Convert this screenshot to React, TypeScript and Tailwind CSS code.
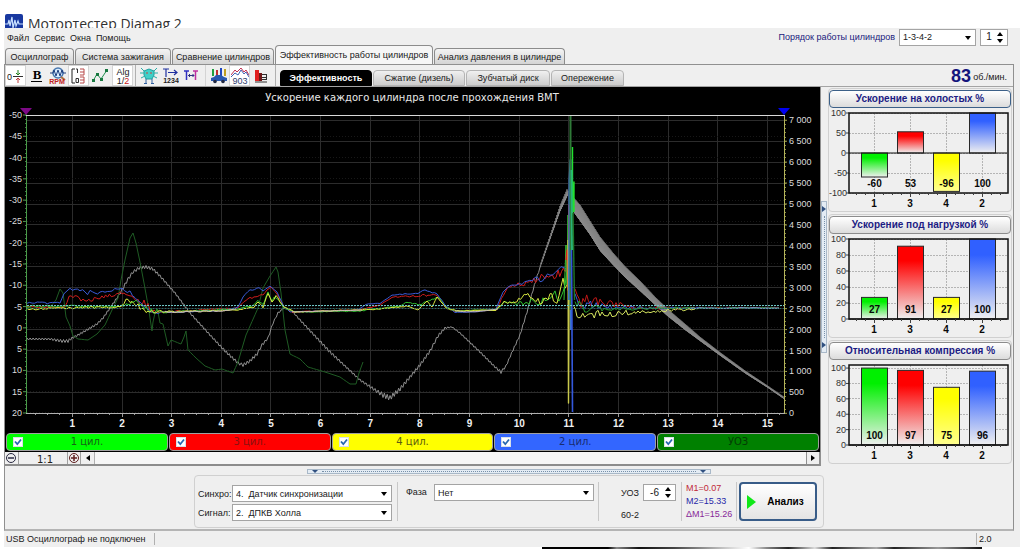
import { useState } from "react";
import type { ReactNode } from "react";
import clsx from "clsx";

type Point = [number, number, number?];

const rnd = (i: number, seed: number) => {
  const v = Math.sin(i * 127.1 + seed * 311.7) * 43758.5453;
  return v - Math.floor(v);
};

// interpolates between the key points and adds noise (third value = amplitude)
const trace = (pts: Point[], seed: number, step = 2, saw = false) => {
  const out: string[] = [];
  let n = 0;
  for (let i = 0; i < pts.length - 1; i++) {
    const [x0, y0, a0 = 0] = pts[i];
    const [x1, y1, a1 = 0] = pts[i + 1];
    const count = Math.max(1, Math.round(Math.abs(x1 - x0) / step));
    for (let k = 0; k < count; k++) {
      const t = k / count;
      const amp = a0 + (a1 - a0) * t;
      const noise = saw ? (n % 2 ? 1 : -1) : rnd(n, seed) * 2 - 1;
      out.push(`${(x0 + (x1 - x0) * t).toFixed(1)},${(y0 + (y1 - y0) * t + noise * amp).toFixed(1)}`);
      n++;
    }
  }
  const last = pts[pts.length - 1];
  out.push(`${last[0]},${last[1]}`);
  return out.join(" ");
};

const rpmRise: Point[] = [
  [27, 339, 1], [50, 339, 1], [62, 341, 1.5], [68, 341, 1.5], [72, 338, 1], [78, 335, 1], [85, 331, 1], [97, 324, 1],
  [103, 318, 1], [110, 308, 1], [117, 298, 1], [122, 290, 1.5], [128, 279, 1.5], [133, 272, 1.5], [139, 268, 1.5],
  [146, 267, 1.5], [153, 269, 1.5], [160, 276, 1.2], [175, 293, 1], [190, 313, 1], [210, 335, 1], [225, 351, 1.3],
  [238, 363, 1.5], [243, 365, 1.5], [250, 361, 1.5], [257, 354, 1.5], [262, 345, 1.5], [268, 338, 1], [273, 323, 1],
  [278, 313, 1], [284, 308, 0.5], [292, 311, 0.5], [300, 320, 1], [330, 352, 1.5], [345, 366, 1], [360, 380, 1],
  [375, 390, 1.5], [383, 395, 2.5], [390, 398, 2.5], [400, 389, 2], [410, 377, 1.5], [420, 365, 1.5], [430, 351, 1.5],
  [438, 336, 1.5], [445, 328, 1], [452, 327, 0.5], [460, 333, 0.7], [480, 352, 1], [495, 367, 1], [501, 372, 1.5],
  [506, 366, 1], [513, 350, 1], [520, 335, 1], [527, 312, 1], [533, 290, 1], [540, 267, 1],
];

const rpmPeak: Point[] = [[540, 267, 1.5], [550, 238, 2], [560, 209, 3], [568, 191, 4]];

const rpmFall: Point[] = [
  [572, 203, 7], [580, 213, 8], [590, 228, 7], [600, 244, 7], [613, 259, 6], [625, 272, 5.5], [640, 286, 5],
  [655, 301, 4], [668, 313, 3.5], [685, 327, 3], [700, 339, 2], [720, 354, 1.6], [745, 372, 1.3], [768, 387, 1], [784, 398, 1],
];

const advance: Point[] = [
  [27, 308, 1], [50, 307, 1], [56, 300], [60, 289], [63, 293], [66, 317], [70, 326], [73, 336], [78, 339], [88, 340],
  [97, 334], [105, 325], [112, 310], [118, 298], [121, 280], [125, 260], [130, 238], [133, 233], [136, 243], [140, 262],
  [144, 283], [148, 305], [152, 331], [153, 322], [155, 313], [158, 312], [160, 323], [163, 324], [168, 346], [171, 340],
  [181, 344], [184, 337], [186, 331], [188, 350], [196, 358], [205, 366], [215, 370], [222, 369], [233, 373], [238, 362],
  [246, 335], [258, 308], [263, 288], [270, 276], [276, 267], [278, 272], [281, 293], [285, 330], [290, 354], [300, 359],
  [308, 367], [325, 372], [340, 377], [350, 384], [356, 384], [359, 373], [363, 362],
];

const blue: Point[] = [
  [27, 303, 1], [60, 303, 1], [64, 293, 1], [70, 290, 2], [95, 293, 3], [105, 291, 2], [122, 289, 1], [130, 292, 2],
  [140, 300, 4], [150, 308, 4], [156, 313, 1], [165, 312, 1], [180, 312, 0.6], [225, 310, 0.5], [238, 307, 0.5],
  [243, 297, 0.5], [250, 290, 1], [259, 288, 0.5], [263, 291, 0], [270, 286, 0], [277, 292, 0], [284, 307, 0.5],
  [290, 312, 0.5], [330, 311, 0.3], [358, 310, 0.3], [366, 304, 0.5], [380, 303, 0.5], [392, 295, 0.5], [405, 294, 0.5],
  [418, 293, 0.5], [425, 290, 0.5], [437, 294, 0.5], [445, 305, 0.5], [455, 312, 0.5], [475, 312, 0.3], [496, 309, 0.5],
  [503, 292, 0.5], [509, 286, 0.5], [522, 283, 1.5], [535, 281, 4], [550, 275, 4], [561, 264, 4], [567, 270, 5],
];
const red: Point[] = [
  [27, 307, 1], [65, 307, 1], [69, 298, 3], [85, 300, 4], [100, 298, 2], [115, 294, 2], [122, 292, 2], [130, 297, 3],
  [140, 301, 4], [150, 308, 4], [156, 313, 1], [165, 312, 1], [238, 308, 0.5], [246, 300, 1], [256, 296, 1],
  [263, 295, 0.5], [267, 290, 0], [271, 287, 0], [277, 294, 0], [284, 307, 0.5], [292, 312, 0.5], [360, 310, 0.5],
  [380, 305, 0.5], [392, 297, 0.5], [415, 296, 1], [428, 296, 2], [437, 295, 1], [445, 307, 0.5], [455, 311, 0.5],
  [496, 310, 0.5], [507, 288, 1], [520, 284, 2], [530, 282, 5], [545, 279, 6], [558, 272, 6], [567, 268, 8],
];
const green: Point[] = [
  [27, 306, 1.5], [65, 306, 1], [120, 307, 1], [128, 303, 3], [138, 302, 2], [146, 309, 3], [155, 311, 3],
  [165, 312, 1], [238, 309, 0.5], [254, 305, 1], [258, 301, 1], [263, 305, 1], [268, 293, 2], [272, 300, 2],
  [276, 297, 1], [284, 308, 0.5], [295, 312, 0.5], [360, 311, 0.5], [390, 307, 0.5], [400, 306, 0.5], [407, 302, 0.5],
  [420, 305, 1], [428, 301, 1], [438, 297, 1], [447, 308, 0.5], [456, 311, 0.5], [496, 310, 0.5], [504, 302, 1],
  [525, 303, 3], [545, 300, 4], [557, 297, 8], [567, 270, 20],
];
const yellow: Point[] = [
  [27, 309, 1], [65, 308, 1], [120, 307, 1], [126, 301, 3], [134, 302, 3], [142, 310, 3], [152, 311, 3],
  [165, 312, 1], [238, 310, 0.5], [254, 307, 0.5], [258, 302, 1], [263, 307, 1], [268, 293, 1], [272, 302, 1],
  [276, 296, 1], [284, 307, 0.5], [295, 312, 0.5], [380, 309, 0.5], [408, 306, 0.5], [418, 310, 0], [427, 301, 0],
  [432, 307, 0], [437, 297, 0], [447, 309, 0.5], [460, 311, 0.3], [496, 310, 0.5], [504, 302, 1], [515, 303, 1],
  [526, 293, 2], [540, 302, 4], [550, 297, 5], [557, 300, 6], [563, 280, 8], [567, 285, 8],
];

const tail = (y: number, amp: number): Point[] => [
  [575, y - 6, amp * 2], [581, y, amp * 1.5], [600, y + 1, amp], [622, 308 + (y - 306) / 2, amp / 2],
  [650, 308, 1.5], [690, 308, 0.8], [740, 308, 0.6], [779, 308, 0.4],
];

const xAt = (v: number) => 22.7 + v * 49.65;
const yAt = (v: number) => 115 + (v + 50) * 4.257;
const rpmAt = (v: number) => 413.3 - v * 0.04186;

const leftTicks = [-50, -45, -40, -35, -30, -25, -20, -15, -10, -5, 0, 5, 10, 15, 20];
const rightTicks = [7000, 6500, 6000, 5500, 5000, 4500, 4000, 3500, 3000, 2500, 2000, 1500, 1000, 500, 0];
const xTicks = [1, 2, 3, 4, 5, 6, 7, 8, 9, 10, 11, 12, 13, 14, 15];

function MainChart() {
  return (
    <svg viewBox="5 87 815 346" className="block w-full bg-black" fontFamily="Liberation Sans, sans-serif">
      <text x="412" y="101" fill="#e8e8e8" fontSize="10" textAnchor="middle" fontFamily="DejaVu Sans, sans-serif">
        Ускорение каждого цилиндра после прохождения ВМТ
      </text>
      <g stroke="#2c2c2c" strokeWidth="1" shapeRendering="crispEdges">
        {xTicks.map((t) => (
          <line key={t} x1={xAt(t)} x2={xAt(t)} y1="115" y2="413" />
        ))}
        {rightTicks.map((t) => (
          <line key={t} x1="27" x2="784" y1={rpmAt(t)} y2={rpmAt(t)} />
        ))}
        {leftTicks.map((t) => (
          <line key={t} x1="27" x2="784" y1={yAt(t)} y2={yAt(t)} stroke="#181818" strokeDasharray="1 2" />
        ))}
      </g>
      <g fontSize="9" fill="#dcdcdc">
        {leftTicks.map((t) => (
          <g key={t}>
            <text x="22" y={yAt(t) + 3} textAnchor="end">{t}</text>
            <line x1="23" x2="27" y1={yAt(t)} y2={yAt(t)} stroke="#4f9a4f" />
          </g>
        ))}
        {rightTicks.map((t) => (
          <g key={t}>
            <text x="789" y={rpmAt(t) + 3}>{t >= 1000 ? `${Math.floor(t / 1000)} ${String(t % 1000).padStart(3, "0")}` : t}</text>
            <line x1="784" x2="787" y1={rpmAt(t)} y2={rpmAt(t)} stroke="#a8a84c" />
          </g>
        ))}
        {xTicks.map((t) => (
          <text key={t} x={xAt(t)} y="427" fontSize="10" textAnchor="middle" fontWeight="bold" fill="#f0f0f0">{t}</text>
        ))}
      </g>
      <g shapeRendering="crispEdges">
        {Array.from({ length: 70 }, (_, i) => (
          <line key={i} x1="25" x2="27" y1={yAt(i - 50)} y2={yAt(i - 50)} stroke="#3c7c3c" />
        ))}
        {Array.from({ length: 70 }, (_, i) => (
          <line key={i} x1="784" x2="786" y1={rpmAt(i * 100)} y2={rpmAt(i * 100)} stroke="#8a8a3c" />
        ))}
        {Array.from({ length: 61 }, (_, i) => (
          <line key={i} x1={xAt(0.25 + i / 4)} x2={xAt(0.25 + i / 4)} y1="413" y2={i % 4 === 3 ? 417 : 415} stroke="#9a9a9a" />
        ))}
        <line x1="26.5" x2="26.5" y1="115" y2="414" stroke="#4a9a4a" />
        <line x1="784.5" x2="784.5" y1="115" y2="414" stroke="#b4b45c" />
        <line x1="26" x2="785" y1="115.5" y2="115.5" stroke="#d8d8d8" />
        <line x1="26" x2="785" y1="413.5" y2="413.5" stroke="#b0b0b0" />
      </g>
      <path d="M20 108h12l-6 7z" fill="#7d0a86" />
      <path d="M778 108h12l-6 7z" fill="#0000f0" />

      <g fill="none" strokeWidth="1" strokeLinejoin="round">
        <polyline points={trace(rpmRise, 1, 1.5, true)} stroke="#909090" />
        <polyline points={trace(rpmPeak, 1, 0.5, true)} stroke="#8a8a8a" />
        <polyline points={trace(rpmFall, 2, 0.5, true)} stroke="#8a8a8a" />
        <polyline points={trace(advance, 3, 3)} stroke="#1f5c24" />
        <polyline points={trace(red, 4, 2)} stroke="#d01c1c" />
        <polyline points={trace(blue, 5, 2.5)} stroke="#3a5cd8" />
        <polyline points={trace(green, 6, 2)} stroke="#30c030" />
        <polyline points={trace(yellow, 7, 2)} stroke="#d8e840" />
        <polyline points={trace([[165, 312, 1], [225, 311, 0.6], [236, 309]], 8, 3)} stroke="#c8b8b8" />
        <polyline points={trace([[292, 312, 0.4], [330, 311, 0.3], [362, 310]], 9, 3)} stroke="#c8b8b8" />
        <polyline points={trace([[455, 311, 0.3], [475, 312, 0.3], [498, 309]], 10, 3)} stroke="#c8b8b8" />
        <polyline points={trace(tail(301, 5), 11, 2)} stroke="#c01818" />
        <polyline points={trace(tail(305, 4), 12, 2)} stroke="#3a5cd8" />
        <polyline points={trace(tail(308, 3), 13, 2)} stroke="#28a028" />
        <polyline points={trace([[574, 305, 4], [577, 315, 3], [600, 315, 5], [622, 313, 3], [650, 311, 2], [695, 309, 1]], 14, 2)} stroke="#d8e860" />
        <polyline points={trace([[690, 308, 0.8], [740, 308, 0.6], [779, 308, 0.4]], 15, 3)} stroke="#8090c0" />
        {/* peak at 11 */}
        <polyline points="564,300 566,245 567,285 568,215 569,300" stroke="#35c835" />
        <polyline points="566,260 567,250 568,290 569,205 570,300" stroke="#d82020" strokeWidth="1.4" />
        <polyline points="568,240 568.5,403 569,310 570,280" stroke="#c8c84c" strokeWidth="1.4" />
        <polyline points="569,300 569.5,180 570.5,160 571,330" stroke="#3c78c8" strokeWidth="2" />
        <polyline points="570.5,310 570.5,116" stroke="#2f7a38" strokeWidth="2" />
        <polyline points="572.5,147 572.5,214 574,182 574,212" stroke="#22e02e" strokeWidth="1.4" />
        <polyline points="571.5,170 572,250" stroke="#28b478" strokeWidth="2" />
        <polyline points="573,213 574.5,300" stroke="#207828" strokeWidth="1.4" />
        <polyline points="571.5,250 572.5,412" stroke="#3458dc" strokeWidth="1.6" />
      </g>
      <line x1="27" x2="784" y1="305.5" y2="305.5" stroke="#6cc4c4" strokeDasharray="2 1" />
      <line x1="27" x2="784" y1="308.5" y2="308.5" stroke="#207070" strokeDasharray="1 2" />
    </svg>
  );
}

type BarInfo = { label: string; value: number; from: string };

const barColors: Record<string, string> = { "1": "#00f000", "3": "#ff0000", "4": "#ffff00", "2": "#3060ff" };

function BarPanel({ id, title, values, min, max, ticks, focused }: {
  id: string;
  title: string;
  values: number[];
  min: number;
  max: number;
  ticks: number[];
  focused?: boolean;
}) {
  const bars: BarInfo[] = ["1", "3", "4", "2"].map((label, i) => ({ label, value: values[i], from: barColors[label] }));
  const y = (v: number) => 5 + ((max - v) / (max - min)) * 80;
  return (
    <section className="rounded-sm border border-[#d0d0d0] pt-px">
      <button
        type="button"
        className={clsx(
          "flex h-[18px] w-full items-center justify-center rounded-sm border bg-gradient-to-b from-white to-[#dcdcdc] text-[10px] font-bold text-[#1c1c84]",
          focused ? "border-[#3c6088]" : "border-[#8c8c8c]"
        )}
      >
        {title}
      </button>
      <svg viewBox="0 0 182 103" className="block w-full" fontFamily="Liberation Sans, sans-serif">
        <defs>
          {bars.map((b) => (
            <linearGradient key={b.label} id={`${id}-${b.label}`} x1="0" y1="0" x2="0" y2="1">
              <stop offset="0.2" stopColor={b.from} />
              <stop offset="1" stopColor={b.label === "4" ? "#ffff90" : "#f0f0f0"} />
            </linearGradient>
          ))}
        </defs>
        <g stroke="#b4b4b4" strokeDasharray="2 1" shapeRendering="crispEdges">
          {ticks.map((t) => (
            <line key={t} x1="20" x2="178" y1={y(t)} y2={y(t)} />
          ))}
          {bars.map((b, i) => (
            <line key={b.label} x1={45.5 + i * 36} x2={45.5 + i * 36} y1="5" y2="85" />
          ))}
        </g>
        {ticks.map((t) => (
          <g key={t}>
            <text x={t < 0 ? 18 : 17} y={y(t) + 3} fontSize="9" textAnchor="end" fill="#303030">{t}</text>
            <line x1="17" x2="20" y1={y(t)} y2={y(t)} stroke="#404040" />
          </g>
        ))}
        {bars.map((b, i) => {
          const top = Math.min(y(b.value), y(0));
          return (
            <rect
              key={b.label}
              x={32.5 + i * 36}
              y={top}
              width="26"
              height={Math.abs(y(b.value) - y(0))}
              fill={`url(#${id}-${b.label})`}
              stroke="#282828"
            />
          );
        })}
        <line x1="20" x2="178" y1={y(0)} y2={y(0)} stroke="#101010" />
        <rect x="20" y="5" width="159" height="80" fill="none" stroke="#101010" strokeWidth="1.5" />
        {Array.from({ length: 17 }, (_, i) => (
          <line key={i} x1={27.5 + i * 9} x2={27.5 + i * 9} y1="85" y2={i % 4 === 2 ? 89 : 87} stroke="#404040" />
        ))}
        <g fontWeight="bold" fontSize="10" textAnchor="middle" fill="#080808">
          {bars.map((b, i) => (
            <text key={b.label} x={45.5 + i * 36} y="79">{b.value}</text>
          ))}
          {bars.map((b, i) => (
            <text key={b.label} x={45 + i * 36} y="99">{b.label}</text>
          ))}
        </g>
      </svg>
    </section>
  );
}

function Select({ id, options, className }: { id: string; options: string[]; className?: string }) {
  return (
    <div className={clsx("relative", className)}>
      <select id={id} className="block h-[17px] w-full appearance-none border border-[#a4a4a4] bg-white px-[3px] text-[9px] leading-[14px] text-[#202020]">
        {options.map((o) => (
          <option key={o}>{o}</option>
        ))}
      </select>
      <svg viewBox="0 0 6 4" className="pointer-events-none absolute top-[7px] right-[5px] h-1 w-1.5">
        <path d="M0 0h6L3 4z" fill="#000" />
      </svg>
    </div>
  );
}

function Spinner({ id, initial, className }: { id: string; initial: number; className?: string }) {
  const [value, setValue] = useState(initial);
  return (
    <div className={clsx("flex h-[17px] items-center border border-[#a4a4a4] bg-white pr-1", className)}>
      <input
        id={id}
        aria-label={id}
        className="w-full min-w-0 flex-1 bg-transparent text-center text-[10px] outline-none"
        value={value}
        onChange={(e) => setValue(Number(e.target.value) || 0)}
      />
      <div className="flex flex-col gap-[3px]">
        <button type="button" aria-label="+" onClick={() => setValue(value + 1)}>
          <svg viewBox="0 0 6 4" className="block h-1 w-1.5"><path d="M0 4h6L3 0z" /></svg>
        </button>
        <button type="button" aria-label="-" onClick={() => setValue(value - 1)}>
          <svg viewBox="0 0 6 4" className="block h-1 w-1.5"><path d="M0 0h6L3 4z" /></svg>
        </button>
      </div>
    </div>
  );
}

function Tool({ label, pressed, children }: { label: string; pressed?: boolean; children: ReactNode }) {
  return (
    <button
      type="button"
      aria-label={label}
      className={clsx("flex h-[21px] w-[21px] items-center justify-center", pressed && "border border-[#d4d4d4] bg-white")}
    >
      <svg viewBox="0 0 18 18" className="h-[18px] w-[18px] shrink-0" fill="none" fontFamily="Liberation Sans, sans-serif">
        {children}
      </svg>
    </button>
  );
}

function Toolbar() {
  return (
    <div className="flex items-center">
      <Tool label="Ноль" pressed>
        <text x="0" y="13" fontSize="9" fill="#202020">0</text>
        <path d="M6 9.5h10" stroke="#303030" />
        <path d="M11 3v5M9 6l2 2 2-2" stroke="#208020" />
        <path d="M11 16v-5M9 13l2-2 2 2" stroke="#c04040" />
      </Tool>
      <Tool label="Жирный">
        <text x="9" y="12" fontSize="13" fontWeight="bold" textAnchor="middle" fill="#000" fontFamily="Liberation Serif, serif">B</text>
        <path d="M3 14.5h11" stroke="#000" />
      </Tool>
      <Tool label="RPM">
        <circle cx="9" cy="6" r="5" fill="#d8ecff" stroke="#4878b0" strokeWidth="1.5" />
        <path d="M1 6h3l1-3 2 6 2-6 2 6 2-6 1 3h3" stroke="#204080" />
        <path d="M12 10l4 3" stroke="#b07040" strokeWidth="2" />
        <text x="8" y="17" fontSize="7" fontWeight="bold" textAnchor="middle" fill="#c02020">RPM</text>
      </Tool>
      <Tool label="Шкала" pressed>
        <path d="M5 2H2v14h3" stroke="#202020" />
        <path d="M6 2h1.500v4M6 11.500h2.500v4H6z" stroke="#303030" />
        <path d="M10 2h4v6h-4M10 5h4M10 10h4v6h-4M10 13h4" stroke="#b84848" />
      </Tool>
      <Tool label="Кривая">
        <path d="M2 14L6 7l4 5 6-9" stroke="#209050" />
        <g fill="#187840">
          <rect x="1" y="12" width="3" height="3" />
          <rect x="5" y="6" width="3" height="3" />
          <rect x="9" y="11" width="3" height="3" />
          <rect x="14" y="2" width="3" height="3" />
        </g>
      </Tool>
      <div className="ml-0.5 flex">
        <Tool label="Алгоритм" pressed>
          <text x="9" y="8" fontSize="9" textAnchor="middle" fill="#202020">Alg</text>
          <text x="9" y="17" fontSize="9" textAnchor="middle" fill="#202020">1/<tspan fill="#c82020">2</tspan></text>
        </Tool>
      </div>
      <span className="mx-0.5 h-[21px] w-px bg-[#b0b0b0]" />
      <Tool label="Датчик">
        <path d="M4 4l5-2 5 2v4l-2 4H6L4 8z" fill="#40d0c8" stroke="#20a0a0" />
        <path d="M1 1l3 3M17 1l-3 3M0 6h4M18 6h-4M1 11l4-2M17 11l-4-2" stroke="#28b0a8" />
        <path d="M6 6h2M10 6h2" stroke="#d04040" />
        <path d="M6 12v4M12 12v4M4 16.500h3M11 16.500h3" stroke="#3060a0" />
      </Tool>
      <Tool label="Порядок">
        <path d="M2 2h6M5 2v8M7 5.500h9M13 3l3 2.500-3 2.500" stroke="#2030a0" strokeWidth="1.200" />
        <text x="10" y="16" fontSize="7" fontWeight="bold" textAnchor="middle" fill="#202020">1234</text>
      </Tool>
      <Tool label="Интервал">
        <path d="M2 4h5M4.500 4v9" stroke="#3030c0" strokeWidth="1.500" />
        <path d="M6 8.500h6M8 7L6.500 8.500 8 10M10.500 7L12 8.500 10.500 10" stroke="#303080" />
        <path d="M11 4h5M13.500 4v9" stroke="#c030a0" strokeWidth="1.500" />
      </Tool>
      <div className="ml-0.5 flex items-center">
        <span className="mx-0.5 h-[21px] w-px bg-[#d4d4d4]" />
        <Tool label="Автомобиль">
          <g strokeWidth="2">
            <path d="M3 2v7" stroke="#20a040" />
            <path d="M7 3v6" stroke="#c03030" />
            <path d="M11 1v8" stroke="#2048c0" />
            <path d="M15 2v7" stroke="#c0a020" />
          </g>
          <path d="M1 14v-3l3-1 2-2h5l3 2 3 1v3z" fill="#2858b0" />
          <circle cx="5" cy="14.500" r="1.800" fill="#202840" />
          <circle cx="13" cy="14.500" r="1.800" fill="#202840" />
        </Tool>
        <Tool label="903" pressed>
          <path d="M0 8l4-5 2 2 4-4 3 4 2-2 3 5" stroke="#c03050" />
          <path d="M0 10l4-4 3 2 3-5 3 4 2-2 3 5" stroke="#4060b0" />
          <text x="9" y="17" fontSize="9" textAnchor="middle" fill="#304070">903</text>
        </Tool>
        <Tool label="Отчёт">
          <path d="M3 3h4v11H3z" fill="#e02020" />
          <path d="M7 6h3v8H7z" fill="#701818" />
          <path d="M10 7.500h5M10 10.500h4M10 12.500h5M3 15h12M14.500 7v6" stroke="#303030" />
        </Tool>
      </div>
      <span className="mr-1 ml-1 h-[21px] w-px bg-[#b0b0b0]" />
    </div>
  );
}

const tabs = [
  { name: "Осциллограф", width: "w-[69px]" },
  { name: "Система зажигания", width: "w-[96px]" },
  { name: "Сравнение цилиндров", width: "w-[102px]" },
  { name: "Эффективность работы цилиндров", width: "w-[158px]" },
  { name: "Анализ давления в цилиндре", width: "w-[131px]" },
];

const modes = [
  { name: "Эффективность", width: "w-[92px]" },
  { name: "Сжатие (дизель)", width: "w-[92px]" },
  { name: "Зубчатый диск", width: "w-[84px]" },
  { name: "Опережение", width: "w-[73px]" },
];

const channels = [
  { name: "1 цил.", color: "bg-[#00ff00]", text: "text-[#146414]" },
  { name: "3 цил.", color: "bg-[#ff0000]", text: "text-[#8c1010]" },
  { name: "4 цил.", color: "bg-[#ffff00]", text: "text-[#5c5c10]" },
  { name: "2 цил.", color: "bg-[#3366ff]", text: "text-[#182c70]" },
  { name: "УОЗ", color: "bg-[#008000]", text: "text-[#043c04]" },
];

function ChannelToggle({ name, color, text }: { name: string; color: string; text: string }) {
  const [on, setOn] = useState(true);
  return (
    <label className={clsx("relative flex h-[18px] flex-1 items-center rounded-sm border border-[#a0a0a0] px-1.5", color)}>
      <span className="relative block h-2.5 w-2.5">
        <input type="checkbox" checked={on} onChange={() => setOn(!on)} className="block h-2.5 w-2.5 appearance-none border border-[#d8e0e8] bg-white" />
        {on && (
          <svg viewBox="0 0 10 10" className="pointer-events-none absolute inset-0">
            <path d="M2 4.500l2.300 2.700L8 2.500" fill="none" stroke="#2868b0" strokeWidth="1.800" />
          </svg>
        )}
      </span>
      <span className={clsx("flex-1 pr-2.5 text-center font-['DejaVu_Sans',sans-serif] text-[10px]", text)}>{name}</span>
    </label>
  );
}

export default function App() {
  const [tab, setTab] = useState(3);
  const [mode, setMode] = useState(0);

  return (
    <div className="min-h-screen overflow-hidden bg-white font-['Liberation_Sans',sans-serif] text-[9px] leading-3 text-[#202020]">
      <header className="flex h-7 items-start gap-[5px] overflow-hidden pt-3.5 pl-[5px]">
        <svg viewBox="0 0 18 18" className="h-[18px] w-[18px] shrink-0">
          <rect width="18" height="18" rx="2" fill="#1838a0" />
          <path d="M0 10h3l1-4 1 6 2-9 1 11 2-8 1 6 2-5 1 3h4" fill="none" stroke="#c8e0ff" strokeWidth="1.200" />
        </svg>
        <h1 className="font-['Open_Sans',sans-serif] text-[14px] leading-5 whitespace-nowrap text-[#303030]">Мотортестер Diamag 2</h1>
      </header>

      <main className="mr-1 ml-1 bg-[#efefef]">
        <div className="flex h-9 justify-between">
          <div className="flex flex-col justify-between">
            <nav className="flex gap-[5px] pt-1 pl-[3px]">
              {["Файл", "Сервис", "Окна", "Помощь"].map((m) => (
                <a key={m} href="#">{m}</a>
              ))}
            </nav>
            <div role="tablist" className="flex items-end gap-px pl-px">
              {tabs.map((t, i) => (
                <button
                  key={t.name}
                  type="button"
                  role="tab"
                  aria-selected={tab === i}
                  onClick={() => setTab(i)}
                  className={clsx(
                    "rounded-t-sm border border-b-0 border-[#8c8c8c] text-center whitespace-nowrap",
                    t.width,
                    tab === i ? "h-[19px] bg-[#f6f6f6]" : "h-4 bg-gradient-to-b from-[#f4f4f4] to-[#d4d4d4]"
                  )}
                >
                  {t.name}
                </button>
              ))}
            </div>
          </div>
          <div className="flex h-[18px] items-center gap-1 pr-3">
            <label htmlFor="order" className="text-[#20207c]">Порядок работы цилиндров</label>
            <Select id="order" options={["1-3-4-2"]} className="w-[77px]" />
            <Spinner id="cylinder" initial={1} className="w-7" />
          </div>
        </div>

        <div className="mr-1.5 border border-b-2 border-[#909090] border-b-[#b4b4b4]">
          <div className="flex h-[22px] items-end justify-between border-b border-[#a4a4a4]">
            <div className="flex items-end">
              <Toolbar />
              <div role="tablist" className="flex h-4 gap-px">
                {modes.map((m, i) => (
                  <button
                    key={m.name}
                    type="button"
                    role="tab"
                    aria-selected={mode === i}
                    onClick={() => setMode(i)}
                    className={clsx(
                      "h-4 rounded-t-sm border text-center whitespace-nowrap",
                      m.width,
                      mode === i
                        ? "border-black bg-black font-bold text-white"
                        : "border-[#b4b4b4] bg-gradient-to-b from-[#f0f0f0] to-[#cccccc]"
                    )}
                  >
                    {m.name}
                  </button>
                ))}
              </div>
            </div>
            <div className="flex h-full items-center gap-0.5 pr-1.5">
              <span className="text-[18px] font-bold text-[#14147c]">83</span>
              <span className="pt-0.5">об./мин.</span>
            </div>
          </div>

          <div className="flex">
            <div className="min-w-0 flex-1">
              <MainChart />
              <div className="flex gap-px bg-black px-px pb-px">
                {channels.map((c) => (
                  <ChannelToggle key={c.name} {...c} />
                ))}
              </div>
              <div className="flex h-[14px] items-stretch border-b-2 border-[#8c8c8c]">
                <button type="button" aria-label="Уменьшить" className="w-3.5 border-r border-[#a0a0a0]">
                  <svg viewBox="0 0 12 12" className="h-3 w-3"><circle cx="6" cy="6" r="4.500" fill="none" stroke="#282840" /><path d="M3 6h6" stroke="#282840" strokeWidth="1.500" /></svg>
                </button>
                <span className="w-12 pl-1 text-center font-['DejaVu_Sans',sans-serif] text-[10px] leading-[15px]">1:1</span>
                <button type="button" aria-label="Увеличить" className="w-3.5 border-x border-[#a0a0a0]">
                  <svg viewBox="0 0 12 12" className="h-3 w-3"><circle cx="6" cy="6" r="4.500" fill="none" stroke="#602020" /><path d="M3 6h6M6 3v6" stroke="#602020" strokeWidth="1.500" /></svg>
                </button>
                <button type="button" aria-label="Влево" className="flex w-3.5 items-center justify-center border-r border-[#b0b0b0]">
                  <svg viewBox="0 0 4 6" className="h-1.5 w-1"><path d="M4 0v6L0 3z" /></svg>
                </button>
                <div className="flex-1 bg-[#f6f6f6]" />
                <button type="button" aria-label="Вправо" className="flex w-3.5 items-center justify-center border-x border-[#909090]">
                  <svg viewBox="0 0 4 6" className="h-1.5 w-1"><path d="M0 0v6l4-3z" /></svg>
                </button>
              </div>
            </div>

            <div className="flex w-[7px] flex-col justify-center border-l border-[#909090]">
              <div className="flex h-[152px] flex-col items-center justify-between border border-[#a8b8c8] bg-[#e4ecf4] py-1">
                <svg viewBox="0 0 4 6" className="h-1.5 w-1"><path d="M0 0v6l4-3z" fill="#305080" /></svg>
                <span className="my-1 w-0 flex-1 border-l border-dotted border-[#7890a8]" />
                <svg viewBox="0 0 4 6" className="h-1.5 w-1"><path d="M0 0v6l4-3z" fill="#305080" /></svg>
              </div>
            </div>

            <aside className="flex w-[186px] flex-col gap-0.5 px-px pt-px">
              <BarPanel id="idle" title="Ускорение на холостых %" values={[-60, 53, -96, 100]} min={-100} max={100} ticks={[100, 50, 0, -50, -100]} focused />
              <BarPanel id="load" title="Ускорение под нагрузкой %" values={[27, 91, 27, 100]} min={0} max={100} ticks={[100, 80, 60, 40, 20, 0]} />
              <BarPanel id="comp" title="Относительная компрессия %" values={[100, 97, 75, 96]} min={0} max={104} ticks={[100, 80, 60, 40, 20, 0]} />
            </aside>
          </div>

          <div className="mx-auto mt-[3px] mb-px flex h-[5px] w-[404px] items-center border border-[#a8b8c8] bg-[#e4ecf4] px-1">
            <svg viewBox="0 0 6 3" className="h-[3px] w-1.5"><path d="M0 0h6L3 3z" fill="#305080" /></svg>
            <span className="mx-1 h-0 flex-1 border-t border-dotted border-[#7890a8]" />
            <svg viewBox="0 0 6 3" className="h-[3px] w-1.5"><path d="M0 0h6L3 3z" fill="#305080" /></svg>
          </div>

          <div className="mx-auto mb-px flex h-[53px] w-[630px] rounded-sm border border-[#d0d0d0] py-1.5 pr-1.5 pl-[3px]">
            <div className="grid w-[200px] grid-cols-[34px_160px] content-end items-center gap-y-0.5 border-r border-[#c8c8c8]">
              <label htmlFor="sync">Синхро:</label>
              <Select id="sync" options={["4.\u00a0\u00a0Датчик синхронизации"]} />
              <label htmlFor="signal">Сигнал:</label>
              <Select id="signal" options={["2.\u00a0\u00a0ДПКВ Холла"]} />
            </div>
            <div className="flex w-[201px] items-start border-r border-[#c8c8c8] pt-0.5 pl-2">
              <label htmlFor="phase" className="w-7 pt-0.5">Фаза</label>
              <Select id="phase" options={["Нет"]} className="w-40" />
            </div>
            <div className="flex w-[83px] flex-col gap-2 border-r border-[#c8c8c8] pt-0.5 pl-[22px]">
              <div className="flex items-center gap-1">
                <label htmlFor="advance" className="w-[18px]">УОЗ</label>
                <Spinner id="advance" initial={-6} className="w-[33px]" />
              </div>
              <span>60-2</span>
            </div>
            <div className="flex flex-1 flex-col justify-center border-r border-[#c8c8c8] pl-1 leading-[13px]">
              <span className="text-[#c02838]">M1=0.07</span>
              <span className="text-[#2828a8]">M2=15.33</span>
              <span className="text-[#882898]">ΔM1=15.26</span>
            </div>
            <button type="button" className="ml-0.5 flex w-[78px] items-center rounded-sm border-2 border-[#385c88] bg-gradient-to-b from-white to-[#e4e4e4] pl-1.5 text-[10px] font-bold text-black">
              <svg viewBox="0 0 9 14" className="h-3.5 w-[9px]"><path d="M0 0v14l9-7z" fill="#10e818" /></svg>
              <span className="flex-1">Анализ</span>
            </button>
          </div>
        </div>

        <footer className="flex h-4 items-center pr-1">
          <span className="w-[151px] border-r border-[#b0b0b0] pl-0.5">USB Осциллограф не подключен</span>
          <span className="flex-1" />
          <span className="w-10 border-l border-[#b0b0b0] pl-0.5">2.0</span>
        </footer>
      </main>
      <div className="mr-[42px] ml-[542px] h-[3px] bg-[linear-gradient(90deg,#000_0%,#000_15%,#888_17%,#111_22%,#444_30%,#ccc_42%,#fff_47%,#888_51%,#222_56%,#ddd_62%,#222_66%,#aaa_76%,#222_80%,#999_90%,#111_100%)]" />
    </div>
  );
}
